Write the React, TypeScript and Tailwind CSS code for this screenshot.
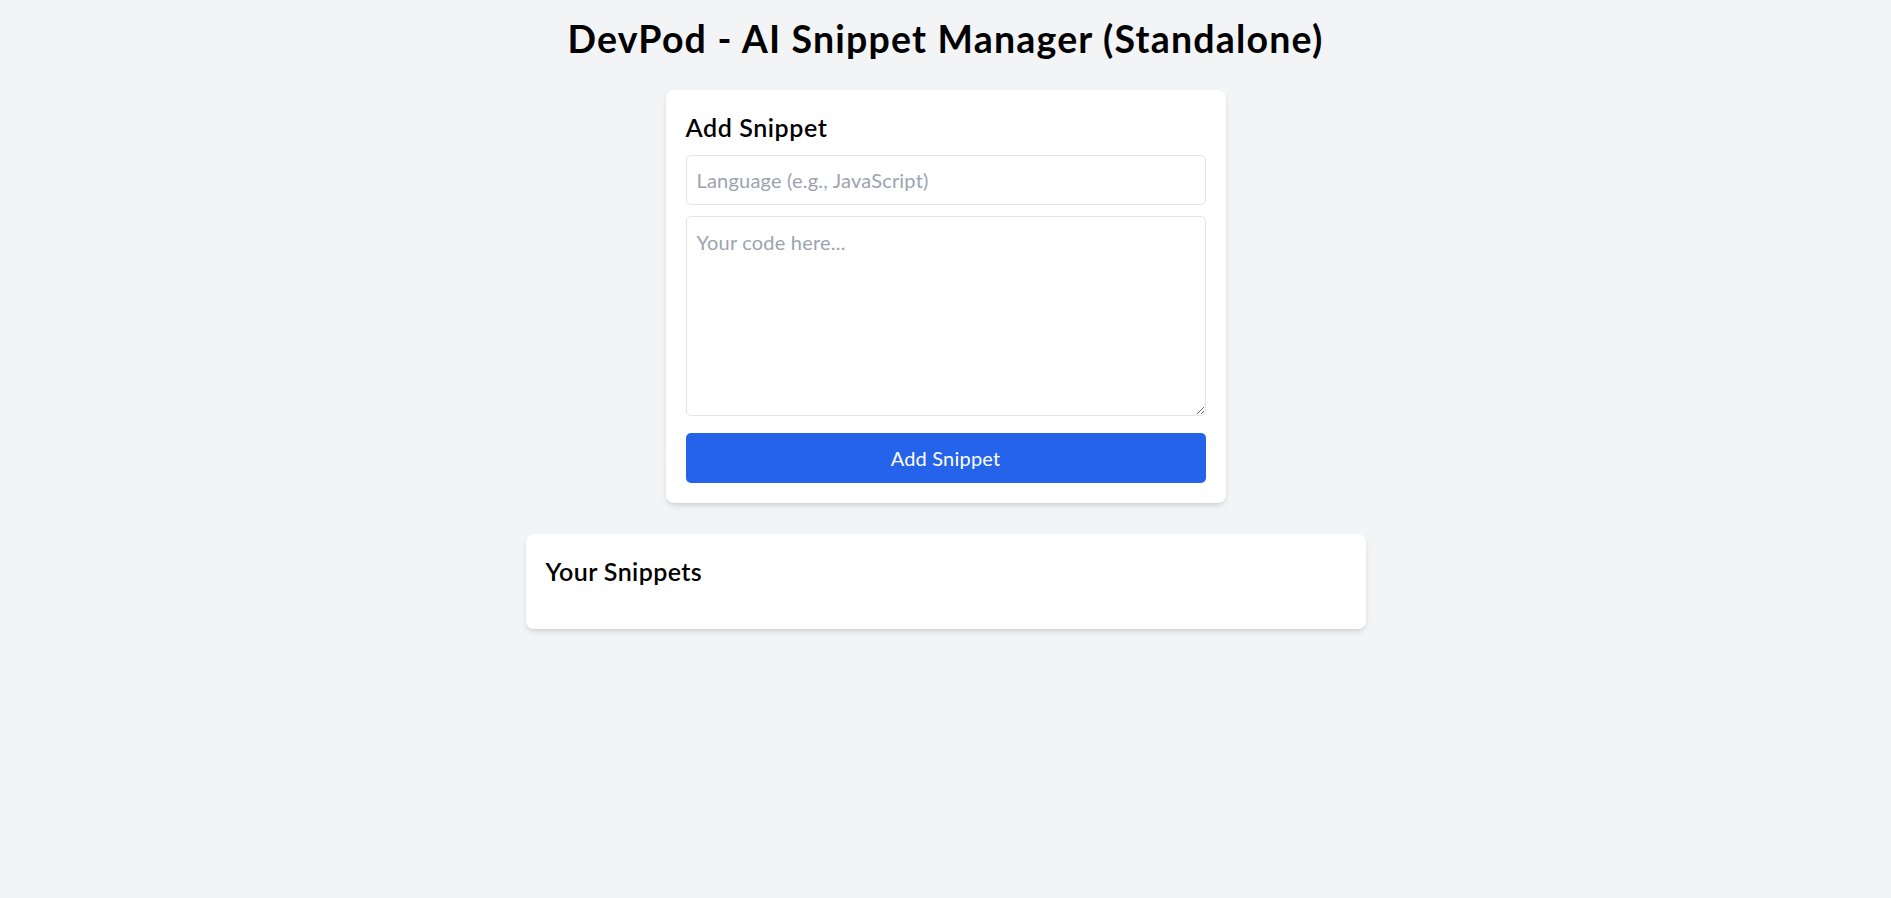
import { useState } from 'react'

type Snippet = { id: number; language: string; code: string }

export default function App() {
  const [language, setLanguage] = useState('')
  const [code,     setCode]     = useState('')
  const [snippets, setSnippets] = useState<Snippet[]>([])

  const addSnippet = () => {
    if (!code.trim()) return
    setSnippets(s => [...s, { id: Date.now(), language, code }])
    setLanguage('')
    setCode('')
  }

  return (
    <div className="min-h-screen bg-[#f3f4f6] pt-[16px] pb-10 font-['Lato','Open_Sans',sans-serif] text-black">
      <h1 className="text-center text-[37.5px] leading-[45px] font-bold tracking-[1.2px] mb-[29px]">
        DevPod - AI Snippet Manager (Standalone)
      </h1>

      {/* Add form */}
      <div className="w-[560px] mx-auto bg-white rounded-[8px] shadow-md p-5">
        <h2 className="text-[25px] leading-[35px] font-semibold tracking-[0.6px] mb-[10px]">Add Snippet</h2>
        <input
          value={language}
          onChange={e => setLanguage(e.target.value)}
          placeholder="Language (e.g., JavaScript)"
          className="block w-full h-[50px] border border-[#e3e4e8] rounded-[5px] px-[10px] text-[20px] tracking-[0.2px] outline-none placeholder:text-[#9ca3af] mb-[11px] mt-[1px]"
        />
        <textarea
          value={code}
          onChange={e => setCode(e.target.value)}
          placeholder="Your code here..."
          className="block w-full h-[200px] border border-[#e3e4e8] rounded-[5px] px-[10px] py-[10px] text-[20px] leading-[30px] tracking-[0.2px] outline-none placeholder:text-[#9ca3af] mb-[17px]"
        />
        <button
          onClick={addSnippet}
          className="block w-full h-[50px] bg-[#2563eb] hover:bg-[#1d4ed8] text-white text-[20px] tracking-[0.2px] rounded-[5px]"
        >
          Add Snippet
        </button>
      </div>

      {/* List */}
      <div className="w-[840px] mx-auto mt-[31px] bg-white rounded-[8px] shadow-md p-5">
        <h2 className="text-[25px] leading-[35px] font-semibold tracking-[0.4px] mb-5">Your Snippets</h2>
        <div className="space-y-4">
          {snippets.map(s => (
            <div key={s.id} className="border border-[#e3e4e8] rounded-[5px] p-4">
              <p className="text-sm font-semibold text-[#2563eb] mb-2">{s.language || 'Plain text'}</p>
              <pre className="text-sm whitespace-pre-wrap font-['Liberation_Mono',monospace]">{s.code}</pre>
            </div>
          ))}
        </div>
      </div>
    </div>
  )
}
